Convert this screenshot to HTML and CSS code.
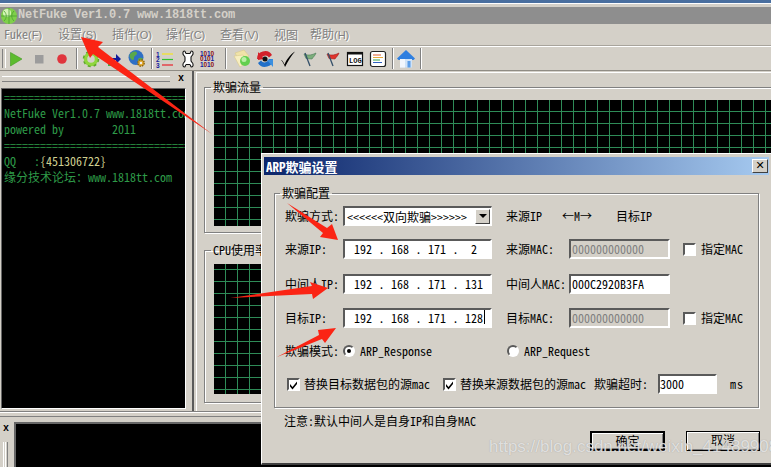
FILE: index.html
```html
<!DOCTYPE html>
<html lang="zh">
<head>
<meta charset="utf-8">
<title>NetFuke</title>
<link rel="stylesheet" href="styles.css">
</head>
<body>
<div class="app">
  <div class="strip"></div>
  <div class="titlebar">
    <svg class="logo" width="18" height="18" viewBox="0 0 18 18"><circle cx="9" cy="9" r="8" fill="#7fd04a"/><circle cx="7" cy="6" r="4" fill="#d6f5b8"/><path d="M1 9h16M9 1v16M4 4c3 3 3 7 0 10M14 4c-3 3-3 7 0 10" stroke="#4a9f30" fill="none" stroke-width=".8"/></svg>
    <span class="title-text">NetFuke Ver1.0.7 www.1818tt.com</span>
  </div>
  <div class="menu">
    <span class="mi">Fuke<i>(F)</i></span>
    <span class="mi">设置<i>(S)</i></span>
    <span class="mi">插件<i>(O)</i></span>
    <span class="mi">操作<i>(C)</i></span>
    <span class="mi">查看<i>(V)</i></span>
    <span class="mi">视图</span>
    <span class="mi">帮助<i>(H)</i></span>
  </div>
  <div class="toolbar">
    <span class="tb"><svg width="20" height="20" viewBox="0 0 20 20"><path d="M4.500 3.500 16 10 4.500 17z" fill="#5dbb2f" stroke="#3f9a22" stroke-width=".6"/></svg></span>
    <span class="tb"><svg width="20" height="20" viewBox="0 0 20 20"><rect x="6" y="6" width="8.500" height="8.500" fill="#9c9c9c"/></svg></span>
    <span class="tb"><svg width="20" height="20" viewBox="0 0 20 20"><circle cx="10" cy="10" r="4.800" fill="#e0353d"/></svg></span>
    <span class="sep"></span>
    <span class="tb"><svg width="20" height="20" viewBox="0 0 20 20"><circle cx="10" cy="10" r="5.500" fill="none" stroke="#8fd63c" stroke-width="3.500"/><circle cx="10" cy="10" r="7.500" fill="none" stroke="#5ea828" stroke-width="1.500" stroke-dasharray="3 3"/></svg></span>
    <span class="tb"><svg width="20" height="20" viewBox="0 0 20 20"><path d="M3 9h9V5l5 5-5 5v-4H3z" fill="#101a9a"/><path d="M4 16h10" stroke="#39b54a" stroke-width="2"/></svg></span>
    <span class="tb"><svg width="20" height="20" viewBox="0 0 20 20"><circle cx="9" cy="8.500" r="7.500" fill="#2f6fc4"/><path d="M3 5c3-3 6-3 7-1 0 3-3 2-3 5s-2 2-3 1-2-3-1-5zM11 10c2-2 4-1 5 0-1 3-3 5-5 4z" fill="#5aa84a"/><circle cx="14" cy="14" r="3.200" fill="#e0a52a" stroke="#8a6410" stroke-width="1.400" stroke-dasharray="1.500 1"/><circle cx="14" cy="14" r="1.200" fill="#eee"/></svg></span>
    <span class="sep"></span>
    <span class="tb"><svg width="20" height="20" viewBox="0 0 20 20"><text x="1" y="7.500" class="tiny blue">1</text><text x="1" y="13" class="tiny blue">2</text><text x="1" y="18.500" class="tiny blue">3</text><path d="M7 5h11" stroke="#f4e422" stroke-width="1.200"/><path d="M7 10.500h11" stroke="#2fc02f" stroke-width="1.200"/><path d="M7 16h11" stroke="#e8202a" stroke-width="1.200"/></svg></span>
    <span class="tb"><svg width="20" height="20" viewBox="0 0 20 20"><path d="M6.500 2c1 0 .8 2.500 1.800 2.500h3.400C12.700 4.500 12.500 2 13.500 2c2 0 2 3 .7 4.500-.7.800-1.200 1-1.200 2v3c0 1 .5 1.200 1.200 2 1.300 1.500 1.300 4.500-.7 4.500-1 0-.8-2.500-1.800-2.500H8.300C7.300 15.500 7.500 18 6.500 18c-2 0-2-3-.7-4.500.7-.800 1.200-1 1.200-2v-3c0-1-.5-1.200-1.200-2C4.500 5 4.500 2 6.500 2z" fill="#fff" stroke="#111" stroke-width="1.100"/></svg></span>
    <span class="tb"><svg width="22" height="20" viewBox="0 0 22 20"><text x="0" y="6.500" class="bin"><tspan class="blue">1</tspan><tspan class="mar">0</tspan><tspan class="blue">1</tspan><tspan class="mar">0</tspan></text><text x="0" y="12" class="bin"><tspan class="mar">0</tspan><tspan class="blue">1</tspan><tspan class="mar">0</tspan><tspan class="blue">1</tspan></text><text x="0" y="17.500" class="bin"><tspan class="blue">1</tspan><tspan class="mar">0</tspan><tspan class="blue">1</tspan><tspan class="mar">0</tspan></text></svg></span>
    <span class="sep"></span>
    <span class="tb first"><svg width="22" height="20" viewBox="0 0 22 20"><path d="M3 4 12 1l5 6-9 6z" fill="#f0e3a8" stroke="#d8c98a" stroke-width=".6"/><path d="M2 7l9-1 6 6-9 6z" fill="#f7eec0" stroke="#d8c98a" stroke-width=".6"/><circle cx="13" cy="12" r="5" fill="#62cf4e"/><circle cx="12" cy="10.500" r="2.500" fill="#b9efa6"/></svg></span>
    <span class="tb t2"><svg width="20" height="20" viewBox="0 0 20 20"><path d="M2 10A8 7.500 0 0 1 17 6l-3 2.500A4.500 4.500 0 0 0 6 10z" fill="#d4202a"/><path d="M3 3v8l6-1z" fill="#d4202a"/><path d="M18 10a8 7.500 0 0 1-15 4l3-2.500A4.500 4.500 0 0 0 14 10z" fill="#1f6fc8"/><path d="M18 18v-8l-6 1z" fill="#3a8fe0"/><circle cx="10" cy="10" r="2.500" fill="#111"/></svg></span>
    <span class="tb t2"><svg width="20" height="20" viewBox="0 0 20 20"><path d="M3 11c1 0 2.500 2 3.500 4.500C8.500 10 13 5 17 2.500 13 7 10 12 7 18c-1-3-2.500-5.500-4-7z" fill="#000"/></svg></span>
    <span class="tb t2"><svg width="20" height="20" viewBox="0 0 20 20"><path d="M4 5c3 1 6 2 12-1-1 3-3 4-4 6-2 0-4-.5-6-.5z" fill="#7cae7c" stroke="#4a7a55" stroke-width=".6"/><path d="M5 4l5 13" stroke="#35506a" stroke-width="1.300"/></svg></span>
    <span class="tb t2"><svg width="20" height="20" viewBox="0 0 20 20"><path d="M4 5c3 1 6 2 12-1-1 3-3 4-4 6-2 0-4-.5-6-.5z" fill="#e0342c" stroke="#a02020" stroke-width=".6"/><path d="M5 4l5 13" stroke="#35506a" stroke-width="1.300"/></svg></span>
    <span class="tb t2"><svg width="20" height="20" viewBox="0 0 20 20"><rect x="2.500" y="3.500" width="15" height="13" fill="#fff" stroke="#111" stroke-width="1.200"/><path d="M2.500 4.500h15" stroke="#111" stroke-width="2"/><text x="4" y="14" class="logt">LOG</text></svg></span>
    <span class="tb t2"><svg width="20" height="20" viewBox="0 0 20 20"><rect x="2.500" y="2.500" width="15" height="15" rx="2" fill="#fff" stroke="#222" stroke-width="1.200"/><path d="M5 6h8" stroke="#e05a2a"/><path d="M5 8.500h10" stroke="#e8a83a"/><path d="M5 11h7" stroke="#30a24a"/><path d="M5 13.500h9" stroke="#3060c0"/></svg></span>
    <span class="sep"></span>
    <span class="tb"><svg width="20" height="20" viewBox="0 0 20 20"><path d="M10 1 19 9.500l-1.500 1.500H2.500L1 9.500z" fill="#2f7fe0"/><path d="M4 10h12v8.500H4z" fill="#cfe3f8"/><path d="M4 10h5v8.500H4z" fill="#f2f7fd"/><rect x="11.500" y="12" width="3" height="6.500" fill="#5c9ee8"/></svg></span>
    <span class="sep"></span>
  </div>
  <div class="main">
    <aside class="left">
      <div class="panel-head"><span class="grip"></span><span class="px">x</span></div>
      <div class="console"><div class="cl">================================</div><div class="cl">NetFuke Ver1.0.7 www.1818tt.com</div><div class="cl">powered by        2011</div><div class="cl">================================</div><div class="cl">QQ   :<span class="qq">{451306722}</span></div><div class="cl">缘分技术论坛：www.1818tt.com</div></div>
    </aside>
    <section class="right">
      <fieldset class="group g1"><legend>欺骗流量</legend><div class="chart c1"></div></fieldset>
      <fieldset class="group g2"><legend>CPU使用率</legend><div class="chart c2"></div></fieldset>
    </section>
  </div>
  <div class="bottom">
    <div class="bottom-head"><span class="px">x</span><span class="vgrip"></span></div>
    <div class="log"></div>
  </div>
</div>

<div class="dialog">
  <div class="dlg-title"><span>ARP欺骗设置</span><span class="close">✕</span></div>
  <fieldset class="config">
    <legend>欺骗配置</legend>
    <div class="form">
      <label class="la">欺骗方式:</label>
      <div class="field combo"><span>&lt;&lt;&lt;&lt;&lt;&lt;双向欺骗&gt;&gt;&gt;&gt;&gt;&gt;</span><span class="drop"></span></div>
      <span class="dir"><span>来源IP</span><span>←M→</span><span>目标IP</span></span>

      <label class="la">来源IP:</label>
      <div class="field ip"><b>192</b><u>.</u><b>168</b><u>.</u><b>171</b><u>.</u><b>2</b></div>
      <label class="lb">来源MAC:</label>
      <div class="field off">000000000000</div>
      <span class="chk"><span class="box"></span>指定MAC</span>

      <label class="la">中间人IP:</label>
      <div class="field ip"><b>192</b><u>.</u><b>168</b><u>.</u><b>171</b><u>.</u><b>131</b></div>
      <label class="lb">中间人MAC:</label>
      <div class="field mac">000C2920B3FA</div>
      <span class="blank"></span>

      <label class="la">目标IP:</label>
      <div class="field ip"><b>192</b><u>.</u><b>168</b><u>.</u><b>171</b><u>.</u><b>128</b><em class="caret"></em></div>
      <label class="lb">目标MAC:</label>
      <div class="field off">000000000000</div>
      <span class="chk"><span class="box"></span>指定MAC</span>

      <label class="la">欺骗模式:</label>
      <div class="radios"><span class="radio on"></span><span class="rl">ARP_Response</span></div>
      <div class="radios r2"><span class="radio"></span><span class="rl">ARP_Request</span></div>

      <div class="opts">
        <span class="chk c1b"><span class="box"><svg width="11" height="11" viewBox="0 0 11 11"><path d="M2 5l2.500 3L9 2.500v2.500L4.500 10.500 2 7.500z" fill="#000"/></svg></span>替换目标数据包的源mac</span>
        <span class="chk c2b"><span class="box"><svg width="11" height="11" viewBox="0 0 11 11"><path d="M2 5l2.500 3L9 2.500v2.500L4.500 10.500 2 7.500z" fill="#000"/></svg></span>替换来源数据包的源mac</span>
        <span class="to">欺骗超时:</span>
        <div class="field time">3000</div>
        <span class="ms">ms</span>
      </div>
    </div>
  </fieldset>
  <div class="note">注意:默认中间人是自身IP和自身MAC</div>
  <div class="actions"><span class="btn def">确定</span><span class="btn">取消</span></div>
</div>

<svg class="arrows" width="771" height="467" viewBox="0 0 771 467">
  <path d="M81 37 103 42 98 47 212 134 93 54 90 58z"/>
  <path d="M287 203 327 228 332 224 338 240 320 237 323 233z"/>
  <path d="M230 298 312 286 310 282 328 288 313 299 312 294 z"/>
  <path d="M277 357 319 335 318 330 336 328 325 343 322 339z"/>
</svg>
<div class="watermark">https://blog.csdn.net/weixin_41489908</div>
</body>
</html>
```
FILE: styles.css
```css
* { box-sizing: border-box; }
html, body { margin: 0; padding: 0; }
body {
  width: 771px; height: 467px; overflow: hidden; position: relative;
  background: #d4d0c8; color: #000;
  font: 12px/14px "Noto Sans Mono CJK SC", "Liberation Mono", "Noto Sans CJK SC", monospace;
}
.app { width: 771px; height: 467px; display: flex; flex-direction: column; }
.strip { height: 3px; background: #4a6f9f; margin-bottom: 4px; flex: none; box-shadow: 0 1px 0 #fff; }
.titlebar { height: 17px; flex: none; background: #8e8e8e; display: flex; align-items: center; gap: 0; padding-left: 0; }
.logo { margin-top: 1px; }
.title-text { font: bold 12px/17px "Liberation Mono", monospace; color: #d4d0c8; letter-spacing: -.2px; }
.menu { height: 22px; flex: none; display: flex; align-items: center; padding-left: 4px; color: #808080; text-shadow: 1px 1px 0 #fff; gap: 14px; border-bottom: 1px solid #a8a49c; }
.mi { white-space: nowrap; width: 40px; }
.mi:nth-child(6) { width: 22px; }
.mi i { font: 11px/14px "Liberation Sans", sans-serif; }
.toolbar { height: 25px; flex: none; display: flex; align-items: center; padding-left: 4.500px; border-top: 1px solid #fff; border-bottom: 1px solid #908c84; position: relative; }
.toolbar::before { content: ""; position: absolute; left: 2px; top: 2px; bottom: 2px; width: 2px; border-left: 1px solid #808080; border-right: 1px solid #fff; }
.tb { width: 23px; height: 22px; flex: none; display: flex; align-items: center; justify-content: center; }
.tb.first { margin-left: 3.500px; width: 22.500px; }
.tb.t2 { width: 22.500px; }
.sep { width: 2px; height: 21px; flex: none; margin: 0 1px 0 2.500px; border-left: 1px solid #808080; border-right: 1px solid #fff; }
.tiny { font: bold 6.500px "Liberation Sans", sans-serif; }
.blue { fill: #1420a0; }
.mar { fill: #8c1010; }
.bin { font: bold 6.500px "Liberation Sans", sans-serif; letter-spacing: -.1px; }
.logt { font: bold 7px "Liberation Mono", monospace; fill: #111; }
.main { height: 341px; flex: none; display: flex; overflow: hidden; border-bottom: 1px solid #808080; }
.left { width: 194px; flex: none; border-right: 2px solid #5a5a5a; padding-right: 3px; }
.panel-head { height: 16px; display: flex; align-items: center; padding: 0 5px 2px 2px; justify-content: space-between; margin-top: 1px; }
.grip { width: 168px; height: 6px; border-top: 1px solid #fff; border-bottom: 1px solid #808080; box-shadow: inset 0 2px 0 #d4d0c8, inset 0 -2px 0 #d4d0c8; background: #fff; }
.px { font: bold 10px/12px "Liberation Mono", monospace; }
.console { margin: 0 0 0 1px; width: 185px; height: 321px; background: #000; color: #2e9a48; overflow: hidden; padding: 1px 0 0 2px; border: 1px solid; border-color: #666 #fff #fff #666; }
.cl { height: 16px; line-height: 14px; white-space: pre; }
.qq { color: #cfcf90; }
.right { flex: 1; min-width: 0; margin-left: 2px; margin-top: 1px; height: 339px; border-left: 1px solid #fff; border-top: 1px solid #fff; padding: 7px 0 0 7px; overflow: hidden; }
.group { margin: 0; width: 700px; padding: 6px 0 0 9px; border: 1px solid #808080; box-shadow: inset 1px 1px 0 #fff, 1px 1px 0 #fff; min-width: 0; }
.group legend { padding: 0 2px; margin-left: -3px; line-height: 14px; }
.config legend { padding: 0 2px; margin-left: -5px; line-height: 14px; }
.g1 { height: 153px; margin-bottom: 10px; }
.g2 { height: 160px; padding-top: 7px; }
.chart { background-color: #000; width: 650px; background-image: linear-gradient(to right, transparent 11px, #2e8b57 11px), linear-gradient(to bottom, transparent 11px, #2e8b57 11px); background-size: 12px 12px; }
.c1 { height: 126px; }
.c2 { height: 130px; background-position: 0 0, 0 -6px; }
.bottom { flex: 1; display: flex; min-height: 0; padding-top: 9px; border-top: 1px solid #fff; position: relative; }
.bottom::before { content: ""; position: absolute; left: 0; right: 0; top: 3px; border-top: 1px solid #808080; }
.bottom-head { width: 14px; flex: none; display: flex; flex-direction: column; align-items: center; gap: 7px; padding: 1px 2px 0 0; }
.vgrip { width: 5px; flex: 1; border-left: 1px solid #fff; border-right: 1px solid #808080; background: #fff; box-shadow: inset 1px 0 0 #d4d0c8, inset -1px 0 0 #d4d0c8; margin-right: 1px; }
.log { flex: 1; background: #000; border-top: 2px solid #666; border-left: 2px solid #666; }

.dialog { position: absolute; left: 261px; top: 153px; width: 510px; height: 312px; background: #d4d0c8; padding: 3px 2px 0 2px; border-top: 1px solid #fff; border-left: 1px solid #fff; border-bottom: 2px solid #404040; box-shadow: inset 1px 1px 0 #d4d0c8; display: flex; flex-direction: column; }
.dlg-title { height: 18px; flex: none; background: linear-gradient(to right, #0a246a, #a6caf0); color: #fff; font: bold 13px/17px "Noto Sans Mono CJK SC", "Noto Sans CJK SC", monospace; padding-left: 2px; display: flex; justify-content: space-between; align-items: center; }
.close { width: 16px; height: 14px; margin-right: 1px; background: #d4d0c8; color: #000; font: bold 11px/12px "DejaVu Sans", sans-serif; text-align: center; border: 1px solid; border-color: #fff #404040 #404040 #fff; }
.config { margin: 11px 0 0 10px; width: 485px; height: 222px; flex: none; padding: 6px 0 0 10px; border: 1px solid #808080; box-shadow: inset 1px 1px 0 #fff, 1px 1px 0 #fff; min-width: 0; }
.form { display: grid; grid-template-columns: 58px 149px 14px 63px 101px 13px 70px; grid-template-rows: 33px 35px 34px 33px 33px 20px; }
.la, .lb { white-space: nowrap; line-height: 20px; }
.la { grid-column: 1; }
.lb { grid-column: 4; }
.form > .field:not(.time) { height: 20px; }
.field.combo, .field.ip { grid-column: 2; }
.field.off, .field.mac { grid-column: 5; }
.blank { grid-column: 7; }
.field { background: #fff; border: 2px solid; border-color: #5a5a5a #fff #fff #5a5a5a; white-space: nowrap; line-height: 15px; padding-left: 1px; }
.combo { display: flex; justify-content: space-between; height: 20px; padding: 1px 1px 0 2px; border-width: 2px 1px 1px 2px; }
.drop { width: 15px; height: 15px; background: #d4d0c8; border: 1px solid; border-color: #fff #404040 #404040 #fff; position: relative; }
.drop::after { content: ""; position: absolute; left: 3px; top: 4px; border: 4px solid transparent; border-top: 4px solid #000; border-bottom: 0; }
.dir { grid-column: 4 / 8; display: flex; gap: 0; line-height: 20px; }
.dir span:nth-child(1) { width: 56px; }
.dir span:nth-child(2) { width: 54px; }
.ip { display: flex; padding-left: 9px; }
.ip b { font-weight: normal; width: 18px; text-align: center; }
.ip u { text-decoration: none; width: 19px; text-align: center; }
.caret { display: block; width: 1px; height: 14px; background: #000; margin-left: 1px; }
.off { background: #d4d0c8; color: #808080; }
.mac { color: #000; }
.chk { grid-column: 7; display: flex; align-items: center; gap: 5px; white-space: nowrap; height: 20px; }
.box { width: 13px; height: 13px; flex: none; background: #fff; border: 2px solid; border-color: #5a5a5a #fff #fff #5a5a5a; display: block; position: relative; }
.box svg { position: absolute; left: -1px; top: -1px; }
.radios { grid-column: 2 / 4; display: flex; align-items: center; gap: 5px; height: 20px; padding-left: 0; }
.r2 { grid-column: 4 / 8; padding-left: 1px; }
.radio { width: 12px; height: 12px; flex: none; border-radius: 50%; background: #fff; border: 2px solid; border-color: #5a5a5a #fff #fff #5a5a5a; position: relative; }
.radio.on::after { content: ""; position: absolute; left: 2px; top: 2px; width: 4px; height: 4px; border-radius: 50%; background: #000; }
.rl { white-space: nowrap; }
.opts { grid-column: 1 / 8; display: flex; align-items: center; padding-left: 2px; }
.c1b { width: 156px; gap: 4px; }
.c2b { width: 151px; gap: 4px; }
.to { width: 64px; }
.time { width: 59px; height: 20px; line-height: 15px; flex: none; padding-left: 0; }
.ms { margin-left: 13px; letter-spacing: 1px; }
.note { margin: 6px 0 0 20px; line-height: 14px; flex: none; }
.actions { display: flex; justify-content: flex-end; gap: 21px; margin: 3px 9px 0 0; }
.btn { width: 74px; height: 20px; line-height: 16px; text-align: center; background: #d4d0c8; border: 1px solid #000; box-shadow: inset 1px 1px 0 #fff, inset -1px -1px 0 #808080; }
.btn.def { border-width: 2px; width: 75px; line-height: 15px; }

.arrows { position: absolute; left: 0; top: 0; pointer-events: none; fill: #fb2414; }
.watermark { position: absolute; left: 489px; top: 437px; font: 17px/20px "Liberation Sans", sans-serif; color: rgba(240, 240, 240, .8); text-shadow: 0 0 1px rgba(120, 120, 120, .6); white-space: nowrap; }
```
